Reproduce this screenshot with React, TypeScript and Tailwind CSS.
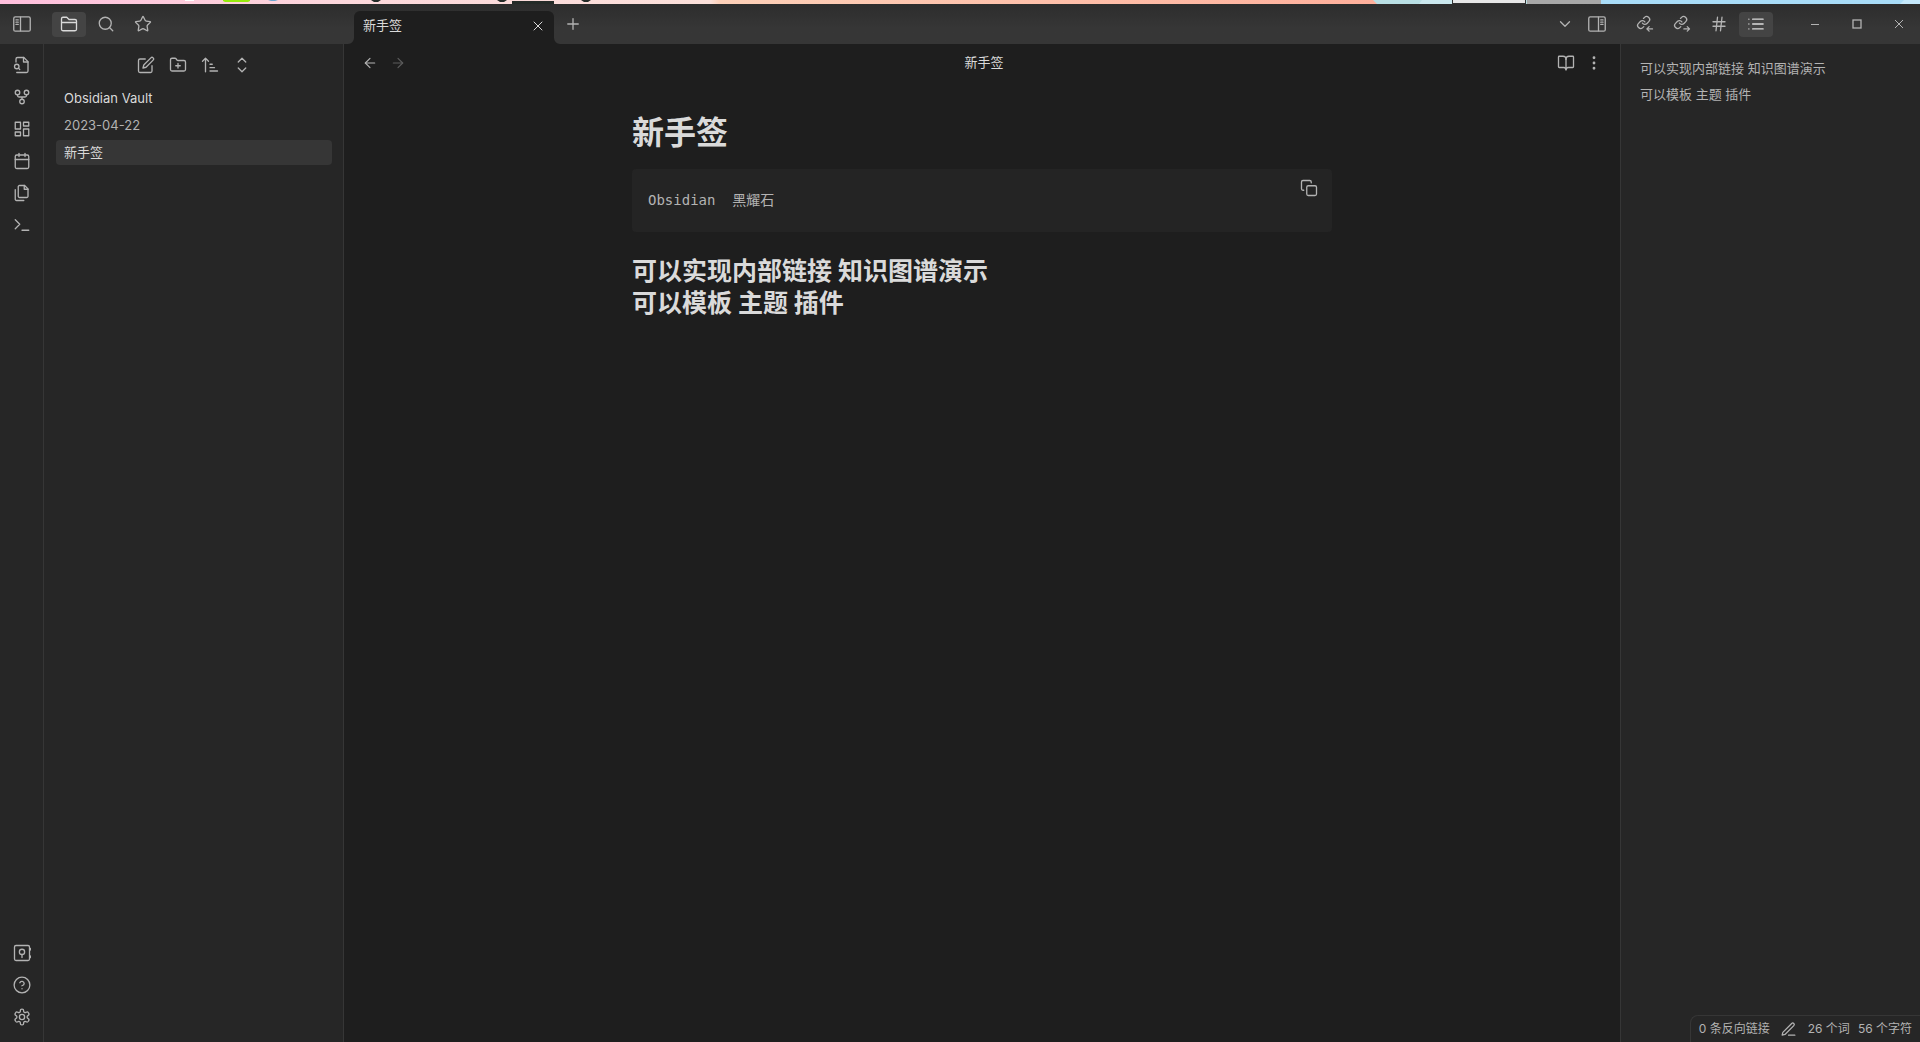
import type { ReactNode } from 'react';
import { ArrowLeft, ArrowRight, BookOpen, Calendar, ChevronDown, EllipsisVertical, Hash, Plus, Search, Star, X } from 'lucide-react';

type IconProps = { children: ReactNode; size?: number };

const Icon = ({ children, size = 18 }: IconProps) => (
  <svg
    width={size}
    height={size}
    viewBox="0 0 24 24"
    fill="none"
    stroke="currentColor"
    strokeWidth="1.75"
    strokeLinecap="round"
    strokeLinejoin="round"
    aria-hidden="true"
  >
    {children}
  </svg>
);

const SidebarToggleIcon = ({ flipped = false }: { flipped?: boolean }) => (
  <Icon>
    <g transform={flipped ? 'matrix(-1 0 0 1 24 0)' : undefined}>
      <rect x="1" y="2.500" width="22" height="19" rx="2" />
      <path d="M10 3v18M4 6.500h3M4 9.500h3M4 12.500h3" />
    </g>
  </Icon>
);

const FolderIcon = () => (
  <Icon>
    <path d="M22 19a2 2 0 0 1-2 2H4a2 2 0 0 1-2-2V5a2 2 0 0 1 2-2h5l3 3h8a2 2 0 0 1 2 2zM2 10h20" />
  </Icon>
);

const LinkArrowIcon = ({ incoming = false }: { incoming?: boolean }) => (
  <Icon>
    <g transform="translate(0.6 0.4) scale(0.8)" strokeWidth="2.2">
      <path d="M10 13a5 5 0 0 0 7.540.540l3-3a5 5 0 0 0-7.070-7.070l-1.720 1.710" />
      <path d="M14 11a5 5 0 0 0-7.540-.540l-3 3a5 5 0 0 0 7.070 7.070l1.710-1.710" />
    </g>
    {incoming ? <path d="M22 18.500h-7.500M17.500 15.500l-3 3 3 3" /> : <path d="M14.500 18.500H22M19 15.500l3 3-3 3" />}
  </Icon>
);

const ribbonTop = [
  {
    label: '打开快速切换',
    icon: (
      <Icon>
        <path d="M4 8V4a2 2 0 0 1 2-2h8.500L20 7.500V20a2 2 0 0 1-2 2H5" />
        <path d="M14 2v6h6" />
        <circle cx="5" cy="14" r="3" />
        <path d="m9 18-1.500-1.500" />
      </Icon>
    )
  },
  {
    label: '查看关系图谱',
    icon: (
      <Icon>
        <circle cx="12" cy="18" r="3" />
        <circle cx="6" cy="6" r="3" />
        <circle cx="18" cy="6" r="3" />
        <path d="M18 9v1a2 2 0 0 1-2 2H8a2 2 0 0 1-2-2V9M12 12v3" />
      </Icon>
    )
  },
  {
    label: '新建白板',
    icon: (
      <Icon>
        <path d="M3 3h7v9H3zM14 3h7v5h-7zM14 12h7v9h-7zM3 16h7v5H3z" />
      </Icon>
    )
  },
  { label: '打开今天的日记', icon: <Calendar size={18} strokeWidth={1.75} /> },
  {
    label: '插入模板',
    icon: (
      <Icon>
        <path d="M15.500 2H8.600c-.4 0-.8.200-1.100.500-.3.300-.5.700-.5 1.100v12.800c0 .400.200.800.500 1.100.3.300.7.500 1.100.500h9.800c.4 0 .8-.2 1.100-.5.300-.3.500-.7.500-1.100V6.500z" />
        <path d="M3 7.600v12.800c0 .400.200.800.500 1.100.3.300.7.500 1.100.500h9.800M15 2v5h5" />
      </Icon>
    )
  },
  {
    label: '打开命令面板',
    icon: (
      <Icon>
        <path d="m3 17 6-6-6-6M12 19h9" />
      </Icon>
    )
  }
];

const ribbonBottom = [
  {
    label: '打开其他库',
    icon: (
      <Icon>
        <rect x="2" y="2" width="20" height="20" rx="2" />
        <circle cx="12" cy="10.500" r="3.500" />
        <path d="M12 14v4M23.500 6v2M23.500 16v2" />
      </Icon>
    )
  },
  {
    label: '帮助',
    icon: (
      <Icon>
        <circle cx="12" cy="12" r="10.500" />
        <path d="M9.100 9a3 3 0 0 1 5.800 1c0 2-3 3-3 3M12 17h.01" />
      </Icon>
    )
  },
  {
    label: '设置',
    icon: (
      <Icon>
        <path d="M12.200 1.500h-.4a2 2 0 0 0-2 2v.7a2 2 0 0 1-3 1.700l-.6-.3a2 2 0 0 0-2.700.700l-.5.900a2 2 0 0 0 .700 2.700l.400.300a2 2 0 0 1 0 3.600l-.4.300a2 2 0 0 0-.7 2.700l.500.900a2 2 0 0 0 2.700.700l.600-.3a2 2 0 0 1 3 1.700v.7a2 2 0 0 0 2 2h.4a2 2 0 0 0 2-2v-.7a2 2 0 0 1 3-1.700l.600.300a2 2 0 0 0 2.700-.7l.5-.9a2 2 0 0 0-.7-2.700l-.4-.3a2 2 0 0 1 0-3.600l.4-.3a2 2 0 0 0 .7-2.700l-.5-.9a2 2 0 0 0-2.700-.7l-.6.300a2 2 0 0 1-3-1.700v-.7a2 2 0 0 0-2-2z" />
        <circle cx="12" cy="12" r="3.500" />
      </Icon>
    )
  }
];

const fileActions = [
  {
    label: '新建笔记',
    icon: (
      <Icon>
        <path d="M11 4H4a2 2 0 0 0-2 2v14a2 2 0 0 0 2 2h14a2 2 0 0 0 2-2v-7" />
        <path d="M18.500 2.500a2.120 2.120 0 0 1 3 3L12 15l-4 1 1-4z" />
      </Icon>
    )
  },
  {
    label: '新建文件夹',
    icon: (
      <Icon>
        <path d="M4 20h16a2 2 0 0 0 2-2V8a2 2 0 0 0-2-2h-7.900a2 2 0 0 1-1.700-.9l-.8-1.200A2 2 0 0 0 7.900 3H4a2 2 0 0 0-2 2v13a2 2 0 0 0 2 2zM12 10v6M9 13h6" />
      </Icon>
    )
  },
  {
    label: '排序方式',
    icon: (
      <Icon>
        <path d="m2 7 4-4 4 4M6 3v18M12 11h3M12 15.500h6M12 20h10" />
      </Icon>
    )
  },
  {
    label: '全部展开',
    icon: (
      <Icon>
        <path d="m7 8 5-5 5 5M7 16l5 5 5-5" />
      </Icon>
    )
  }
];

const files = ['2023-04-22', '新手签'];
const headings = ['可以实现内部链接 知识图谱演示', '可以模板 主题 插件'];
const currentFile = '新手签';

const IconButton = ({ label, children }: { label: string; children: ReactNode }) => (
  <button type="button" aria-label={label} className="flex h-6 w-8 items-center justify-center">
    {children}
  </button>
);

const TabButton = ({ label, active = false, children }: { label: string; active?: boolean; children: ReactNode }) => (
  <button
    type="button"
    aria-label={label}
    className={
      active
        ? 'flex h-[25px] w-[34px] items-center justify-center rounded bg-[#444444] text-[#dadada]'
        : 'flex h-[25px] w-[34px] items-center justify-center rounded'
    }
  >
    {children}
  </button>
);

// sliver of the desktop above the window
const DesktopEdge = () => (
  <svg className="block h-1 w-full shrink-0" viewBox="0 0 1920 4" preserveAspectRatio="none" aria-hidden="true">
    <defs>
      <linearGradient id="sky">
        <stop offset="0" stopColor="#ffbfdd" />
        <stop offset="0.180" stopColor="#fdd8dc" />
        <stop offset="0.370" stopColor="#fbe0da" />
        <stop offset="0.375" stopColor="#fdd0b8" />
        <stop offset="0.716" stopColor="#ffb09c" />
      </linearGradient>
    </defs>
    <rect width="1920" height="4" fill="url(#sky)" />
    <path d="M1373 0h547v4h-543z" fill="#b9dfe4" />
    <path d="M1422 0h30v4h-33z" fill="#cbe8ee" />
    <path d="M1601 0h319v4h-319z" fill="#a9dcf8" />
    <path d="M1904 0h16v4h-20z" fill="#c4e8fb" />
    <path d="M1452 0h74v4h-74z" fill="#333333" />
    <path d="M1453 0h72v3h-72z" fill="#e8e8e8" />
    <path d="M1527 0h74v4h-74z" fill="#a8a8a8" />
    <path d="M185 0h9v1h-9z" fill="#ffffff" />
    <path d="M223 0h27v1l-2 1h-23l-2-1z" fill="#96ea0c" />
    <path d="M268 0h10l-3 1h-4z" fill="#6ba5cf" />
    <path d="M371 0h10l-3 2h-4zM497 0h10l-3 2h-4zM581 0h10l-3 2h-4zM512 1h42v3h-42z" fill="#252b28" />
  </svg>
);

const TitleBar = () => (
  <header className="flex h-10 shrink-0 bg-linear-to-b from-[#2d2d2d] to-[#363636] to-60% text-[#b3b3b3]">
    <div className="flex w-[354px] shrink-0 items-center pl-1.5">
      <IconButton label="折叠左侧边栏">
        <SidebarToggleIcon />
      </IconButton>
      <div className="ml-3.5 flex gap-[3px]">
        <TabButton label="文件列表" active>
          <FolderIcon />
        </TabButton>
        <TabButton label="搜索">
          <Search size={18} strokeWidth={1.75} />
        </TabButton>
        <TabButton label="星标">
          <Star size={18} strokeWidth={1.75} />
        </TabButton>
      </div>
    </div>
    <div className="relative flex h-[33px] w-[200px] items-center justify-between self-end rounded-t-md bg-[#1e1e1e] pb-[3px] pl-[9px] pr-1 text-[13px] text-[#dadada]">
      <svg className="absolute -left-1.5 bottom-0" width="6" height="6" aria-hidden="true">
        <path d="M6 0v6H0a6 6 0 0 0 6-6z" fill="#1e1e1e" />
      </svg>
      <span>{currentFile}</span>
      <button type="button" aria-label="关闭" className="flex size-6 items-center justify-center">
        <X size={16} strokeWidth={1.5} />
      </button>
      <svg className="absolute -right-1.5 bottom-0" width="6" height="6" aria-hidden="true">
        <path d="M0 0v6h6a6 6 0 0 1-6-6z" fill="#1e1e1e" />
      </svg>
    </div>
    <div className="flex flex-1 items-center justify-between pl-[3px] pr-[5px]">
      <IconButton label="新标签页">
        <Plus size={18} strokeWidth={1.75} />
      </IconButton>
      <div className="flex items-center">
        <IconButton label="标签页列表">
          <ChevronDown size={18} strokeWidth={1.75} />
        </IconButton>
        <IconButton label="折叠右侧边栏">
          <SidebarToggleIcon flipped />
        </IconButton>
        <div className="ml-[15px] mr-[26px] flex gap-[3px]">
          <TabButton label="反向链接">
            <LinkArrowIcon incoming />
          </TabButton>
          <TabButton label="出链">
            <LinkArrowIcon />
          </TabButton>
          <TabButton label="标签">
            <Hash size={18} strokeWidth={1.75} />
          </TabButton>
          <TabButton label="大纲" active>
            <Icon>
              <path d="M7.500 5.500h14M7.500 12h14M7.500 18.500h14M2.500 5.500h.01M2.500 12h.01M2.500 18.500h.01" />
            </Icon>
          </TabButton>
        </div>
        <div className="flex gap-2.5">
          <IconButton label="最小化">
            <svg width="10" height="10" stroke="currentColor" aria-hidden="true">
              <path d="M1 5.500h8" />
            </svg>
          </IconButton>
          <IconButton label="最大化">
            <svg width="10" height="10" fill="none" stroke="currentColor" aria-hidden="true">
              <rect x="1" y="1" width="8" height="8" strokeWidth="1.3" />
            </svg>
          </IconButton>
          <IconButton label="关闭窗口">
            <svg width="10" height="10" stroke="currentColor" aria-hidden="true">
              <path d="M1 1l8 8M9 1l-8 8" />
            </svg>
          </IconButton>
        </div>
      </div>
    </div>
  </header>
);

const Ribbon = () => (
  <nav className="flex w-11 shrink-0 flex-col items-center justify-between border-r border-[#363636] bg-[#262626] pb-[13px] pt-[9px] text-[#b3b3b3]">
    <div className="flex flex-col gap-2">
      {ribbonTop.map((item) => (
        <IconButton key={item.label} label={item.label}>
          {item.icon}
        </IconButton>
      ))}
    </div>
    <div className="flex flex-col gap-2">
      {ribbonBottom.map((item) => (
        <IconButton key={item.label} label={item.label}>
          {item.icon}
        </IconButton>
      ))}
    </div>
  </nav>
);

const FileExplorer = () => (
  <aside className="w-[300px] shrink-0 border-r border-[#363636] bg-[#262626] pl-3 pr-[11px] pt-[9px] text-[13px] leading-[25px] text-[#b3b3b3]">
    <div className="flex justify-center">
      {fileActions.map((action) => (
        <IconButton key={action.label} label={action.label}>
          {action.icon}
        </IconButton>
      ))}
    </div>
    <div className="mt-[9px] px-2 text-[#dadada]">Obsidian Vault</div>
    <ul className="mt-0.5 flex flex-col gap-0.5">
      {files.map((file) => (
        <li key={file}>
          <a
            href="#note"
            className={file === currentFile ? 'block rounded bg-[#363636] px-2 text-[#dadada]' : 'block rounded px-2'}
          >
            {file}
          </a>
        </li>
      ))}
    </ul>
  </aside>
);

const NoteView = () => (
  <main className="min-w-0 flex-1 bg-[#1e1e1e] text-[#dadada]">
    <div className="grid h-[38px] grid-cols-3 items-center px-3 text-[13px] text-[#b3b3b3]">
      <div className="flex">
        <button type="button" aria-label="后退" className="flex h-6 w-7 items-center justify-center">
          <ArrowLeft size={16} strokeWidth={1.75} />
        </button>
        <button type="button" aria-label="前进" disabled className="flex h-6 w-7 items-center justify-center text-[#5c5c5c]">
          <ArrowRight size={16} strokeWidth={1.75} />
        </button>
      </div>
      <div className="pl-1 text-center text-[#dadada]">{currentFile}</div>
      <div className="flex justify-end">
        <button type="button" aria-label="阅读视图" className="flex h-6 w-7 items-center justify-center">
          <BookOpen size={18} strokeWidth={1.75} />
        </button>
        <button type="button" aria-label="更多选项" className="flex h-6 w-7 items-center justify-center">
          <EllipsisVertical size={18} strokeWidth={1.75} />
        </button>
      </div>
    </div>
    <article id="note" className="mx-auto max-w-[700px] pt-[31px]">
      <h1 className="text-[32px] font-bold leading-10">{currentFile}</h1>
      <div className="relative mt-4 rounded bg-[#242424] px-4 py-5">
        <pre className="text-sm leading-[23px] text-[#b3b3b3]">
          <code className="block font-['DejaVu_Sans_Mono','Noto_Sans_CJK_SC',monospace]">Obsidian  黑耀石</code>
        </pre>
        <button type="button" aria-label="复制" className="absolute right-[7px] top-[7px] flex h-6 w-8 items-center justify-center text-[#b3b3b3]">
          <Icon>
            <rect x="9" y="9" width="13" height="13" rx="2" />
            <path d="M5 15H4a2 2 0 0 1-2-2V4a2 2 0 0 1 2-2h9a2 2 0 0 1 2 2v1" />
          </Icon>
        </button>
      </div>
      <div className="mt-[23px]">
        {headings.map((heading) => (
          <h2 key={heading} className="text-[25px] font-bold leading-8">
            {heading}
          </h2>
        ))}
      </div>
    </article>
  </main>
);

const Outline = () => (
  <aside className="flex w-[300px] shrink-0 flex-col justify-between border-l border-[#363636] bg-[#262626] text-[#b3b3b3]">
    <ul className="px-[19px] pt-[11px] text-[13px] leading-[26px]">
      {headings.map((heading) => (
        <li key={heading}>{heading}</li>
      ))}
    </ul>
    <footer className="flex items-center gap-2 self-end rounded-tl-lg border-l border-t border-[#363636] px-2 text-xs leading-[26px]">
      <span>0 条反向链接</span>
      <button type="button" aria-label="编辑模式" className="flex w-[22px] justify-center">
        <Icon size={17}>
          <path d="M12 20h9M16.500 3.500a2.120 2.120 0 0 1 3 3L7 19l-4 1 1-4z" />
        </Icon>
      </button>
      <span>26 个词</span>
      <span>56 个字符</span>
    </footer>
  </aside>
);

export default function App() {
  return (
    <div className="flex min-h-screen flex-col bg-[#1e1e1e] font-['Inter','Noto_Sans_CJK_SC',sans-serif]">
      <DesktopEdge />
      <TitleBar />
      <div className="flex flex-1">
        <Ribbon />
        <FileExplorer />
        <NoteView />
        <Outline />
      </div>
    </div>
  );
}
